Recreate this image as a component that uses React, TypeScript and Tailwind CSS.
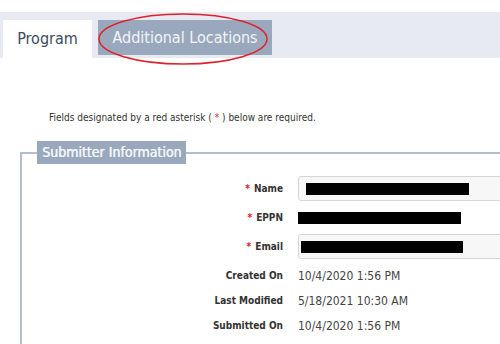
import React from 'react'

const font = { fontFamily: '"DejaVu Sans Condensed", "DejaVu Sans", sans-serif' }

interface Row {
  label: string
  required?: boolean
  kind: 'input' | 'plain' | 'text'
  value?: string
  barWidth?: number
  inset?: number
}

const rows: Row[] = [
  { label: 'Name', required: true, kind: 'input', barWidth: 163, inset: 7 },
  { label: 'EPPN', required: true, kind: 'plain', barWidth: 163 },
  { label: 'Email', required: true, kind: 'input', barWidth: 162, inset: 2 },
]

const stamps: Row[] = [
  { label: 'Created On', kind: 'text', value: '10/4/2020 1:56 PM' },
  { label: 'Last Modified', kind: 'text', value: '5/18/2021 10:30 AM' },
  { label: 'Submitted On', kind: 'text', value: '10/4/2020 1:56 PM' },
]

function Redacted({ width }: { width: number }) {
  return <div className="h-[12px] bg-black" style={{ width }} />
}

function Label({ row }: { row: Row }) {
  return (
    <div className="w-[261px] text-right text-[10px] font-bold text-[#333]">
      {row.required && <span className="text-[#e0202a] mr-[4px]">*</span>}
      {row.label}
    </div>
  )
}

export default function App() {
  return (
    <div className="relative w-[500px] h-[344px] overflow-hidden bg-white" style={font}>
      <div className="pt-[12px]">
        <div className="h-[46px] bg-[#e7eaf0] flex items-start pt-[8px] pl-[3px] gap-[6px]">
          <div className="h-[38px] w-[89px] bg-white flex items-center justify-center text-[16px] text-[#3d4b5d]">
            Program
          </div>
          <div className="h-[35px] w-[174px] bg-[#9aa8bd] flex items-center justify-center text-[16px] text-[#f3f5f8]">
            Additional Locations
          </div>
        </div>
      </div>

      <div className="pt-[52px] pl-[49px] text-[10px] text-[#333]">
        Fields designated by a red asterisk ( <span className="text-[#e0202a]">*</span> ) below are required.
      </div>

      <fieldset className="mt-[16px] ml-[20px] w-[520px] border-2 border-[#b3bdcf] pb-[10px]">
        <legend className="ml-[15px] h-[23px] px-[5px] bg-[#9aa8bd] text-[14px] text-[#f3f5f8] flex items-center [text-shadow:0.4px_0_0_#f3f5f8]">
          Submitter Information
        </legend>
        <div className="pt-[10px] flex flex-col">
          {rows.map((r) => (
            <div key={r.label} className="flex items-center h-[29px]">
              <Label row={r} />
              <div className="flex-1 pl-[15px]">
                {r.kind === 'input' ? (
                  <div
                    className="h-[25px] flex items-center rounded-[3px] border border-[#d6d6d6] bg-[#f7f7f7]"
                    style={{ paddingLeft: r.inset }}
                  >
                    <Redacted width={r.barWidth!} />
                  </div>
                ) : (
                  <Redacted width={r.barWidth!} />
                )}
              </div>
            </div>
          ))}
          <div className="pt-[2px] flex flex-col">
            {stamps.map((r) => (
              <div key={r.label} className="flex items-center h-[25px]">
                <Label row={r} />
                <div className="flex-1 pl-[15px] text-[12px] text-[#444]">{r.value}</div>
              </div>
            ))}
          </div>
        </div>
      </fieldset>

      <svg className="absolute left-0 top-0 pointer-events-none" width="500" height="80">
        <ellipse cx="183" cy="39" rx="84" ry="25" fill="none" stroke="#e0202a" strokeWidth="1.5" />
      </svg>
    </div>
  )
}
